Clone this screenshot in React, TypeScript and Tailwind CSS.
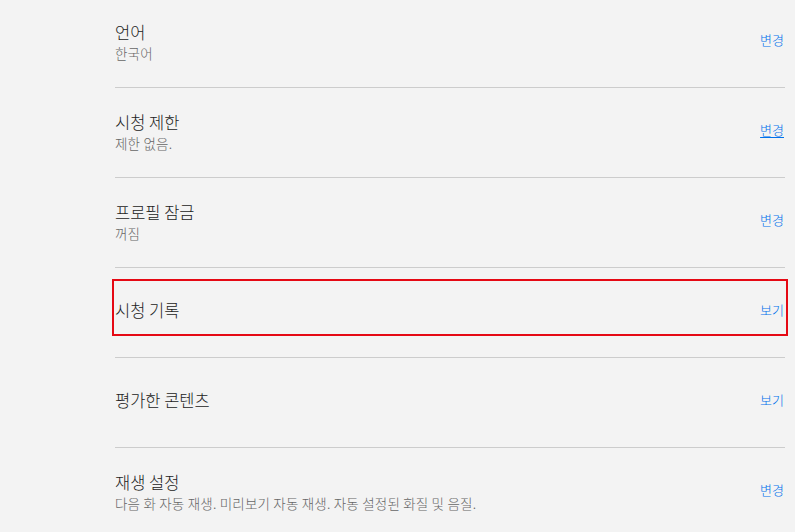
const font = { fontFamily: '"Noto Sans CJK KR", "Noto Sans", sans-serif' };

type Row = {
  title: string;
  sub?: string;
  action: string;
  hover?: boolean;
  focused?: boolean;
};

const rows: Row[] = [
  { title: '언어', sub: '한국어', action: '변경' },
  { title: '시청 제한', sub: '제한 없음.', action: '변경', hover: true },
  { title: '프로필 잠금', sub: '꺼짐', action: '변경' },
  { title: '시청 기록', action: '보기', focused: true },
  { title: '평가한 콘텐츠', action: '보기' },
  {
    title: '재생 설정',
    sub: '다음 화 자동 재생. 미리보기 자동 재생. 자동 설정된 화질 및 음질.',
    action: '변경',
  },
];

function RowContent({ row }: { row: Row }) {
  const lift = !row.focused;
  return (
    <>
      <div className={`flex flex-col ${lift && !row.sub ? 'mb-[5px]' : ''}`}>
        <span className="text-[16.5px] leading-[22px] font-light text-[#222]">{row.title}</span>
        {row.sub && (
          <span className="text-[13.5px] leading-[21px] font-light tracking-[0.2px] text-[#666]">
            {row.sub}
          </span>
        )}
      </div>
      <a
        href="#"
        className={`text-[13px] font-light text-[#0071eb] mr-px ${lift ? 'mb-[5px]' : ''} ${row.hover ? 'underline underline-offset-2' : 'no-underline'}`}
      >
        {row.action}
      </a>
    </>
  );
}

export default function App() {
  return (
    <div className="min-h-[532px] bg-[#f3f3f3] overflow-hidden" style={font}>
      <div className="ml-[115px] w-[670px] -mt-[2px]">
        {rows.map((row) =>
          row.focused ? (
            <div key={row.title} className="h-[90px] border-b border-[#cccccc] pt-[11px]">
              <div className="h-[57px] -mx-[3px] px-[1px] pt-[5px] border-2 border-[#e50914] flex items-center justify-between">
                <RowContent row={row} />
              </div>
            </div>
          ) : (
            <div
              key={row.title}
              className="h-[90px] border-b border-[#cccccc] flex items-center justify-between"
            >
              <RowContent row={row} />
            </div>
          )
        )}
      </div>
    </div>
  );
}
